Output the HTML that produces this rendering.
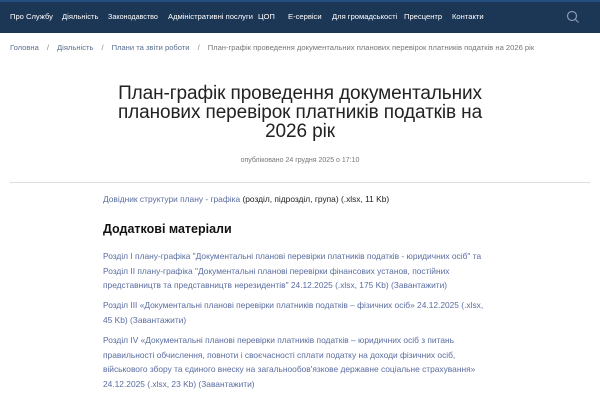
<!DOCTYPE html>
<html><head><meta charset="utf-8"><style>
body{margin:0;width:600px;height:400px;overflow:hidden;background:#fff;font-family:"Liberation Sans",sans-serif;}
.nav{position:absolute;top:0;left:0;width:600px;height:33px;background:#1c3656;border-top:2px solid #244d80;box-sizing:border-box;}
.nav span{position:absolute;top:10px;color:#fff;font-size:7.6px;white-space:nowrap;}
.bc{position:absolute;top:43px;left:10px;font-size:7.6px;color:#5a6f8f;white-space:nowrap;}
.bc i{font-style:normal;color:#888;margin:0 8px;}
.bc b{font-weight:normal;color:#777;}
h1{position:absolute;top:84px;left:0;width:600px;margin:0;text-align:center;font-weight:normal;font-size:19px;line-height:19px;color:#222;letter-spacing:-0.1px;}
.date{position:absolute;top:157px;width:600px;text-align:center;font-size:7px;color:#777;}
hr{position:absolute;top:182px;left:10px;width:580px;margin:0;border:0;border-top:1px solid #ddd;}
.c{position:absolute;left:103px;font-size:8.4px;line-height:14.5px;color:#5a6da0;white-space:nowrap;}
.c .k{color:#222;}
h2{position:absolute;left:103px;top:222px;margin:0;font-size:12.5px;color:#111;}
</style></head><body>
<div class="nav">
<span style="left:10px">Про Службу</span>
<span style="left:62px">Діяльність</span>
<span style="left:108px;font-size:7.2px">Законодавство</span>
<span style="left:168px">Адміністративні послуги</span>
<span style="left:258px">ЦОП</span>
<span style="left:288px">Е-сервіси</span>
<span style="left:332px">Для громадськості</span>
<span style="left:404px">Пресцентр</span>
<span style="left:452px">Контакти</span>
<svg style="position:absolute;left:566px;top:8px" width="14" height="14" viewBox="0 0 14 14"><circle cx="6" cy="6" r="4.5" fill="none" stroke="#8a9ab0" stroke-width="1.2"/><line x1="9.3" y1="9.3" x2="12.5" y2="12.5" stroke="#8a9ab0" stroke-width="1.2"/></svg>
</div>
<div class="bc">Головна<i>/</i>Діяльність<i>/</i>Плани та звіти роботи<i>/</i><b>План-графік проведення документальних планових перевірок платників податків на 2026 рік</b></div>
<h1>План-графік проведення документальних<br>планових перевірок платників податків на<br>2026 рік</h1>
<div class="date">опубліковано 24 грудня 2025 о 17:10</div>
<hr>
<div class="c" style="top:192px">Довідник структури плану - графіка <span class="k">(розділ, підрозділ, група) (.xlsx, 11 Kb)</span></div>
<h2>Додаткові матеріали</h2>
<div class="c" style="top:249px">Розділ I плану-графіка "Документальні планові перевірки платників податків - юридичних осіб" та<br>Розділ II плану-графіка "Документальні планові перевірки фінансових установ, постійних<br>представництв та представництв нерезидентів" 24.12.2025 (.xlsx, 175 Kb) (Завантажити)</div>
<div class="c" style="top:298px">Розділ III «Документальні планові перевірки платників податків – фізичних осіб» 24.12.2025 (.xlsx,<br>45 Kb) (Завантажити)</div>
<div class="c" style="top:333px">Розділ IV «Документальні планові перевірки платників податків – юридичних осіб з питань<br>правильності обчислення, повноти і своєчасності сплати податку на доходи фізичних осіб,<br>військового збору та єдиного внеску на загальнообов'язкове державне соціальне страхування»<br>24.12.2025 (.xlsx, 23 Kb) (Завантажити)</div>
</body></html>
